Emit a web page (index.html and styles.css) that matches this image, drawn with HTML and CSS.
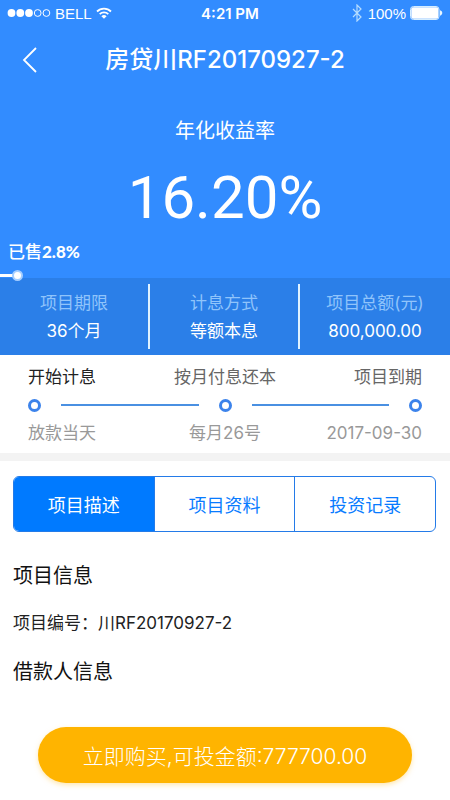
FILE: index.html
```html
<!DOCTYPE html>
<html lang="zh-CN">
<head>
<meta charset="utf-8">
<meta name="viewport" content="width=device-width, initial-scale=1">
<title>房贷川RF20170927-2</title>
<link rel="stylesheet" href="styles.css">
</head>
<body>
<div class="page">
  <header class="hero">
    <div class="status">
      <div class="status-left">
        <svg class="signal" width="44" height="10" viewBox="0 0 44 10" aria-hidden="true">
          <g fill="#fff"><circle cx="4.5" cy="5" r="3.9"/><circle cx="13.3" cy="5" r="3.9"/><circle cx="22" cy="5" r="3.9"/></g>
          <g fill="none" stroke="#fff"><circle cx="30.7" cy="5" r="3.4"/><circle cx="39.4" cy="5" r="3.4"/></g>
        </svg>
        <span>BELL</span>
        <svg width="16" height="12" viewBox="0 0 16 12" aria-hidden="true">
          <g fill="none" stroke="#fff" stroke-width="1.8"><path d="M1 4.5a10 10 0 0 1 14 0"/><path d="M3.7 7.2a6.2 6.2 0 0 1 8.6 0"/></g>
          <path d="M8 11.8 5.4 9.2a3.7 3.7 0 0 1 5.2 0z" fill="#fff"/>
        </svg>
      </div>
      <time class="clock">4:21 PM</time>
      <div class="status-right">
        <svg width="10" height="18" viewBox="0 0 10 18" aria-hidden="true"><path d="m1 5 8 8-4 4V1l4 4-8 8" fill="none" stroke="#b5dcff" stroke-width="1.2"/></svg>
        <span class="percent">100%</span>
        <svg width="33" height="14" viewBox="0 0 33 14" aria-hidden="true"><rect x=".5" y=".5" width="28.5" height="13" rx="3" fill="none" stroke="#d5edff"/><rect x="1.3" y="1.3" width="27" height="11.4" rx="2" fill="#fff"/><path d="M30 4.3c3 .8 3 4.6 0 5.4z" fill="#e8f6ff"/></svg>
      </div>
    </div>
    <nav class="nav">
      <button class="back" type="button" aria-label="返回">
        <svg width="16" height="28" viewBox="0 0 16 28" aria-hidden="true"><path d="M14 2 2 14l12 12" fill="none" stroke="#fff" stroke-width="1.8"/></svg>
      </button>
      <h1 class="title">房贷川RF20170927-2</h1>
    </nav>
    <p class="rate-label">年化收益率</p>
    <p class="rate">16.20%</p>
    <p class="sold">已售<span class="sold-value">2.8%</span></p>
    <div class="progress"><span class="progress-fill" style="width:3.8%"></span></div>
    <dl class="facts">
      <div class="fact"><dt>项目期限</dt><dd>36个月</dd></div>
      <div class="fact"><dt>计息方式</dt><dd>等额本息</dd></div>
      <div class="fact"><dt>项目总额(元)</dt><dd>800,000.00</dd></div>
    </dl>
  </header>

  <section class="schedule">
    <div class="row names"><span class="current">开始计息</span><span>按月付息还本</span><span>项目到期</span></div>
    <div class="track"><i class="dot"></i><i class="line"></i><i class="dot"></i><i class="line"></i><i class="dot"></i></div>
    <div class="row dates"><span>放款当天</span><span>每月26号</span><span>2017-09-30</span></div>
  </section>

  <main class="content">
    <div class="tabs" role="tablist">
      <button class="tab active" type="button" role="tab" aria-selected="true">项目描述</button>
      <button class="tab" type="button" role="tab" aria-selected="false">项目资料</button>
      <button class="tab" type="button" role="tab" aria-selected="false">投资记录</button>
    </div>
    <h2>项目信息</h2>
    <p class="detail">项目编号：川RF20170927-2</p>
    <h2>借款人信息</h2>
  </main>

  <footer class="footer">
    <button class="buy" type="button">立即购买,可投金额:777700.00</button>
  </footer>
</div>
</body>
</html>
```
FILE: styles.css
```css
*,
*::after {
  box-sizing: border-box;
  margin: 0;
  padding: 0;
}

body {
  background: #fff;
  color: #111;
  font-family: Inter, "Noto Sans CJK SC", sans-serif;
}

button {
  border: 0;
  background: none;
  color: inherit;
  font: inherit;
  cursor: pointer;
}

.page {
  display: flex;
  flex-direction: column;
  min-height: 100vh;
}

.hero {
  background: #328cff;
  color: #fff;
  text-align: center;
}

.status {
  display: grid;
  grid-template-columns: 1fr auto 1fr;
  align-items: center;
  height: 26px;
  padding: 0 7px;
  font-family: "Liberation Sans", sans-serif;
  font-size: 15px;
}

.status-left,
.status-right {
  display: flex;
  align-items: center;
  gap: 4px;
}

.status-right {
  justify-content: flex-end;
}

.percent {
  margin-left: 2px;
}

.clock {
  padding-left: 10px;
  font-family: Inter, sans-serif;
  font-weight: 600;
}

.nav {
  display: grid;
  grid-template-columns: 44px 1fr 44px;
  align-items: center;
  height: 68px;
}

.back {
  display: flex;
  justify-content: flex-end;
  padding: 6px;
}

.title {
  font-size: 24px;
  font-weight: 500;
  line-height: 32px;
}

.rate-label {
  padding-top: 23px;
  font-size: 20px;
  line-height: 28px;
}

.rate {
  padding-top: 15px;
  font-family: Roboto, sans-serif;
  font-size: 60px;
  line-height: 76px;
}

.sold {
  padding: 4px 8px 0;
  font-size: 17px;
  font-weight: 500;
  line-height: 24px;
  text-align: left;
}

.sold-value {
  font-family: Lato, sans-serif;
  font-weight: 900;
}

.progress {
  display: flex;
  height: 14px;
  padding-bottom: 1px;
  align-items: flex-end;
}

.progress-fill {
  position: relative;
  height: 3px;
  background: #fff;
}

.progress-fill::after {
  content: "";
  position: absolute;
  top: -4px;
  right: -6px;
  width: 11px;
  height: 11px;
  border: 2px solid #a5ceff;
  border-radius: 50%;
  background: #fff;
}

.facts {
  display: grid;
  grid-template-columns: repeat(3, 1fr);
  padding: 6px 0;
  background: #2b7fe8;
  font-size: 17px;
  line-height: 28px;
}

.fact {
  padding: 5px 0 4px;
}

.fact:not(:last-child) {
  border-right: 2px solid #dff2ff;
}

.fact dt {
  color: #90c4fb;
}

.schedule {
  padding: 8px 28px 6px;
  border-bottom: 8px solid #f3f3f3;
  font-size: 17px;
  line-height: 28px;
}

.row {
  display: grid;
  grid-template-columns: 1fr auto 1fr;
}

.row > :last-child {
  text-align: right;
}

.names {
  color: #666;
}

.names .current {
  color: #222;
}

.dates {
  color: #999;
}

.track {
  display: flex;
  align-items: center;
  gap: 20px;
  height: 28px;
}

.dot {
  width: 13px;
  height: 13px;
  border: 3px solid #3c83eb;
  border-radius: 50%;
}

.line {
  flex: 1;
  height: 2px;
  background: #4a90e2;
}

.content {
  padding: 15px 14px 14px 13px;
}

.tabs {
  display: flex;
  height: 56px;
  overflow: hidden;
  border: 1px solid #247be8;
  border-radius: 6px;
}

.tab {
  flex: 1;
  color: #087bff;
  font-size: 18px;
}

.tab + .tab {
  border-left: 1px solid #247be8;
}

.tab.active {
  background: #007aff;
  color: #fff;
}

h2 {
  padding-top: 30px;
  font-size: 20px;
  font-weight: 400;
  line-height: 28px;
}

.detail {
  padding-top: 21px;
  color: #222;
  font-size: 17px;
  line-height: 24px;
}

.detail + h2 {
  padding-top: 23px;
}

.footer {
  margin-top: auto;
  padding: 0 38px 17px;
}

.buy {
  width: 100%;
  height: 56px;
  border-radius: 28px;
  background: #ffb400;
  box-shadow: 0 2px 5px #ffcf6080;
  color: #fff;
  font-size: 21px;
  font-weight: 300;
}
```
